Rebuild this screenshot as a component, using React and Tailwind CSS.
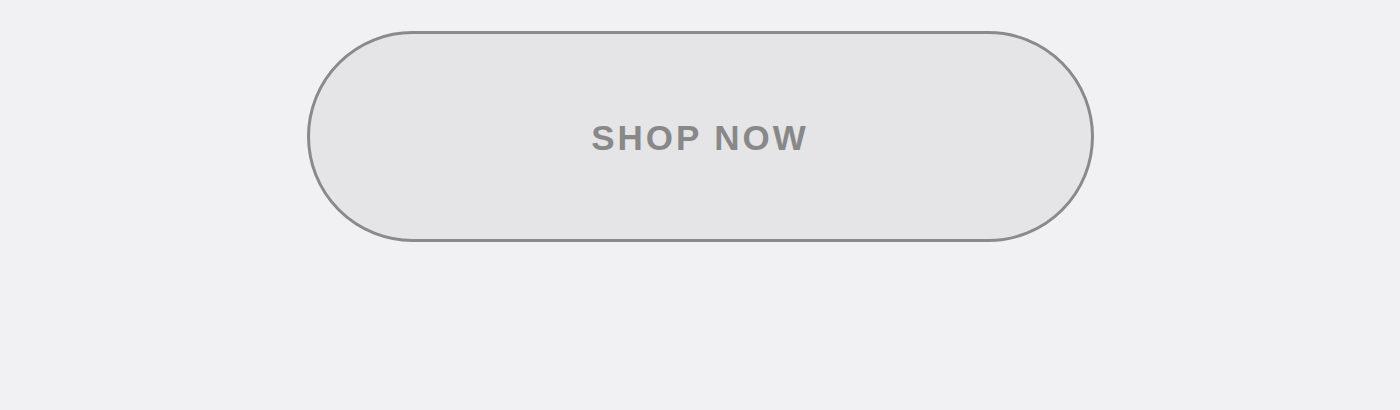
export default function App() {
  return (
    <div className="min-h-[410px] w-full bg-[#f1f1f3] flex justify-center pt-[31px]">
      {/* Pill call-to-action */}
      <button className="w-[787px] h-[211px] rounded-full border-[3px] border-[#8a8a8b] bg-[#e5e5e7] flex items-center justify-center">
        <span className="mt-[2px] font-['Liberation_Sans',Arial,sans-serif] font-bold text-[35px] tracking-[0.085em] text-[#888889] leading-none">
          SHOP NOW
        </span>
      </button>
    </div>
  );
}
